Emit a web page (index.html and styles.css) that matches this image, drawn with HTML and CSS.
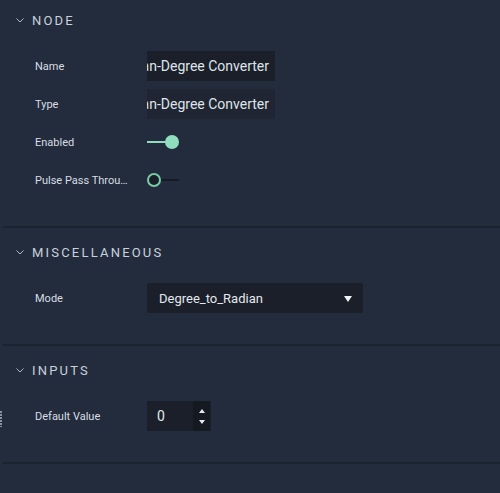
FILE: index.html
```html
<!DOCTYPE html>
<html>
<head>
<meta charset="utf-8">
<link rel="stylesheet" href="styles.css">
</head>
<body>
<div class="panel">
  <section class="section first">
    <div class="header">
      <svg class="chev" width="8" height="5" viewBox="0 0 8 5"><polyline points="0.5,0.5 4,4 7.5,0.5" fill="none" stroke="#aeb6c2" stroke-width="1"/></svg>
      <span class="title">NODE</span>
    </div>
    <div class="rows">
      <div class="row">
        <div class="label">Name</div>
        <div class="text-field dark"><span>Radian-Degree Converter</span></div>
      </div>
      <div class="row">
        <div class="label">Type</div>
        <div class="text-field"><span>Radian-Degree Converter</span></div>
      </div>
      <div class="row">
        <div class="label">Enabled</div>
        <div class="toggle on"><span class="track"></span><span class="knob"></span></div>
      </div>
      <div class="row">
        <div class="label">Pulse Pass Through</div>
        <div class="toggle off"><span class="knob"></span><span class="track"></span></div>
      </div>
    </div>
  </section>
  <section class="section">
    <div class="header">
      <svg class="chev" width="8" height="5" viewBox="0 0 8 5"><polyline points="0.5,0.5 4,4 7.5,0.5" fill="none" stroke="#aeb6c2" stroke-width="1"/></svg>
      <span class="title">MISCELLANEOUS</span>
    </div>
    <div class="rows">
      <div class="row">
        <div class="label">Mode</div>
        <div class="select"><span>Degree_to_Radian</span><span class="caret"></span></div>
      </div>
    </div>
  </section>
  <section class="section">
    <div class="header">
      <svg class="chev" width="8" height="5" viewBox="0 0 8 5"><polyline points="0.5,0.5 4,4 7.5,0.5" fill="none" stroke="#aeb6c2" stroke-width="1"/></svg>
      <span class="title">INPUTS</span>
    </div>
    <div class="rows">
      <div class="row port">
        <div class="label">Default Value</div>
        <div class="number">
          <span class="num-val">0</span>
          <span class="spin"><span class="up"></span><span class="down"></span></span>
        </div>
      </div>
    </div>
  </section>
</div>
</body>
</html>
```

FILE: styles.css
```css
* { box-sizing: border-box; }
html, body {
  margin: 0;
  padding: 0;
  background: #232c3c;
  height: 100%;
}
body {
  font-family: Roboto, "Liberation Sans", sans-serif;
  color: #d3d8e0;
  overflow: hidden;
}
.panel {
  display: flex;
  flex-direction: column;
}
.section {
  padding-top: 14px;
  padding-bottom: 31px;
  border-bottom: 2px solid #1c2330;
  margin-left: 3px;
}
.section.first {
  padding-top: 10px;
}
.header {
  height: 20px;
  display: flex;
  align-items: center;
  padding-left: 13px;
}
.chev {
  display: block;
  margin-top: 1px;
}
.title {
  margin-left: 8px;
  font-size: 13px;
  letter-spacing: 2.2px;
  color: #c9d1dc;
  font-weight: 400;
}
.rows {
  margin-top: 21px;
  display: flex;
  flex-direction: column;
  gap: 8px;
}
.row {
  height: 30px;
  display: flex;
  align-items: center;
  padding-left: 32px;
  position: relative;
}
.label {
  width: 96px;
  margin-right: 16px;
  font-size: 11px;
  color: #d8dde5;
  white-space: nowrap;
  overflow: hidden;
  text-overflow: ellipsis;
}
.text-field {
  width: 128px;
  height: 30px;
  background: #1f2532;
  display: flex;
  justify-content: flex-end;
  align-items: center;
  overflow: hidden;
  padding-right: 6px;
  font-size: 14px;
  color: #dfe4ea;
  white-space: nowrap;
}
.text-field.dark {
  background: #1a1f29;
}
.text-field span { flex: none; }
.toggle {
  display: flex;
  align-items: center;
  height: 14px;
}
.toggle .track {
  display: block;
  height: 2px;
  width: 19px;
}
.toggle.on .track {
  background: #8fdcbc;
}
.toggle.on .knob {
  width: 14px;
  height: 14px;
  border-radius: 50%;
  background: #8fdfbf;
  margin-left: -1px;
}
.toggle.off .knob {
  width: 14px;
  height: 14px;
  border-radius: 50%;
  border: 2px solid #79cba6;
  background: #1a1f29;
}
.toggle.off .track {
  background: #161b24;
  width: 18px;
}
.select {
  width: 216px;
  height: 30px;
  background: #1a1f29;
  border-radius: 2px;
  display: flex;
  align-items: center;
  justify-content: space-between;
  padding: 0 11px 0 12px;
  font-size: 13px;
  color: #e4e8ee;
}
.caret {
  width: 0;
  height: 0;
  border-left: 4.5px solid transparent;
  border-right: 4.5px solid transparent;
  border-top: 6px solid #f2f4f7;
  margin-top: 1px;
}
.number {
  width: 64px;
  height: 30px;
  background: #1a1f29;
  display: flex;
  align-items: center;
  justify-content: space-between;
  border-radius: 1px;
}
.num-val {
  padding-left: 10px;
  font-size: 14px;
  color: #e4e8ee;
}
.spin {
  width: 17px;
  height: 30px;
  margin-right: 1px;
  background: #141922;
  display: flex;
  flex-direction: column;
  align-items: center;
  justify-content: center;
  gap: 7px;
}
.up {
  width: 0;
  height: 0;
  border-left: 3.5px solid transparent;
  border-right: 3.5px solid transparent;
  border-bottom: 4px solid #e7eaef;
}
.down {
  width: 0;
  height: 0;
  border-left: 3.5px solid transparent;
  border-right: 3.5px solid transparent;
  border-top: 4px solid #e7eaef;
}
.port::before {
  content: "";
  position: absolute;
  left: -3px;
  top: 10px;
  width: 2px;
  height: 16px;
  background: repeating-linear-gradient(to bottom, #8a93a0 0 2px, transparent 2px 3px);
}
```
